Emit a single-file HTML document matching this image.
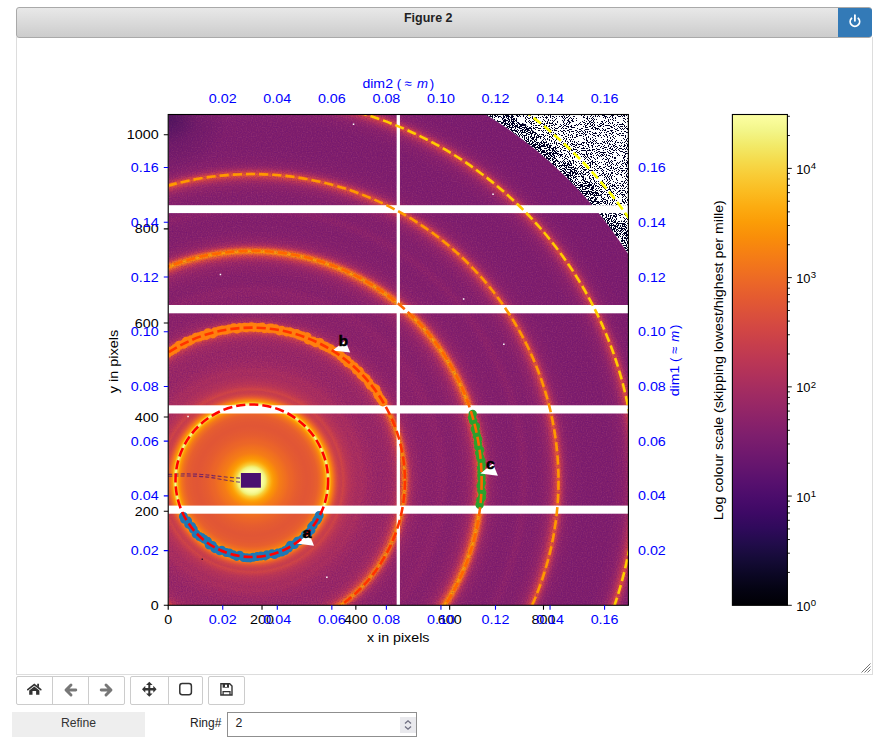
<!DOCTYPE html>
<html><head><meta charset="utf-8">
<style>
html,body{margin:0;padding:0;background:#fff;width:882px;height:747px;overflow:hidden;position:relative;font-family:"Liberation Sans",sans-serif;}
.hdr{position:absolute;left:16px;top:7px;width:854px;height:29px;border:1px solid #a9a9a9;border-radius:3px;background:linear-gradient(#e8e8e8,#cccccc);}
.hdr .t{position:absolute;left:0;right:34px;top:6px;text-align:center;font-weight:bold;font-size:13px;color:#222;letter-spacing:0.1px}
.pbtn{position:absolute;left:838px;top:8px;width:34px;height:29px;background:#337ab7;border-radius:0 3px 3px 0;}
.cv{position:absolute;left:16px;top:37px;width:855px;height:637px;border:1px solid #ddd;border-top:none;}
.bg{position:absolute;top:676px;height:27px;border:1px solid #ccc;border-radius:2px;background:#fff;}
.bd{position:absolute;top:0;bottom:0;width:1px;background:#ccc;}
.refine{position:absolute;left:12px;top:712px;width:133px;height:25px;background:#eeeeee;color:#333;font-size:12.2px;line-height:23px;text-align:center;}
.ring{position:absolute;left:190px;top:711px;height:25px;line-height:25px;font-size:12px;color:#222;}
.inp{position:absolute;left:227px;top:712px;width:188px;height:23px;border:1px solid #8f8f8f;background:#fff;}
.inp .v{position:absolute;left:7.5px;top:-1px;line-height:23px;font-size:12.3px;color:#222;}
.spin{position:absolute;left:172px;top:4px;width:16px;height:16px;background:#e9e9ed;}
</style></head><body>
<div class="hdr"></div>
<div class="pbtn"><svg width="34" height="29" style="position:absolute;left:0;top:0"><path d="M13.5 10.3A4.7 4.7 0 1 0 20.3 10.3" fill="none" stroke="#fff" stroke-width="1.8" stroke-linecap="round"/><path d="M16.9 7.2V12.8" stroke="#fff" stroke-width="1.8" stroke-linecap="round"/></svg></div>
<div class="cv"><svg width="10" height="10" style="position:absolute;right:1px;bottom:1px"><path d="M0.5 9.5L9.5 0.5M3.5 9.5L9.5 3.5M6.5 9.5L9.5 6.5" stroke="#666" stroke-width="0.9"/></svg></div>
<div class="bg" style="left:16px;width:107px"><div class="bd" style="left:35px"></div><div class="bd" style="left:71px"></div></div>
<div class="bg" style="left:130px;width:71px"><div class="bd" style="left:37px"></div></div>
<div class="bg" style="left:208px;width:35px"></div>
<svg width="882" height="747" style="position:absolute;left:0;top:0">
<path fill="#333" d="M29.2 690.6L34.3 686.6L39.4 690.6V694.7H36.1V690.9H32.5V694.7H29.2Z"/>
<path fill="none" stroke="#333" stroke-width="1.6" stroke-linecap="round" d="M27.8 689.7L34.3 684.6L40.8 689.7"/>
<path fill="#333" d="M37.2 683.8H39V687.2L37.2 685.9Z"/>
<path fill="none" stroke="#777" stroke-width="2.9" stroke-linecap="round" stroke-linejoin="round" d="M75.8 690H67M71 685L66 690L71 695"/>
<path fill="none" stroke="#777" stroke-width="2.9" stroke-linecap="round" stroke-linejoin="round" d="M101.2 690H110M106 685L111 690L106 695"/>
<path fill="#333" d="M149.3 681.7L152.6 685H150.3V688H153.3V685.7L156.6 689.2L153.3 692.7V690.4H150.3V693.4H152.6L149.3 696.7L146 693.4H148.3V690.4H145.3V692.7L142 689.2L145.3 685.7V688H148.3V685H146Z"/>
<rect x="179.8" y="683.5" width="11.6" height="11.2" rx="2.4" fill="none" stroke="#333" stroke-width="1.5"/>
<path fill="none" stroke="#333" stroke-width="1.4" d="M220.9 683.8H229.7L232 686.1V695H220.9Z"/>
<path fill="#333" d="M222.6 683.8H229V687.7H222.6Z"/>
<path fill="#fff" d="M225 684.7H227V687H225Z"/>
<path fill="none" stroke="#333" stroke-width="1.3" d="M223.1 695V691.7H230V695"/>
</svg>
<div class="refine">Refine</div>
<div class="ring">Ring#</div>
<div class="inp"><div class="v">2</div><div class="spin"><svg width="16" height="16"><path d="M5 6.5L8 3.8L11 6.5M5 9.5L8 12.2L11 9.5" fill="none" stroke="#6e6e80" stroke-width="1.3"/></svg></div></div>
<svg width="882" height="747" viewBox="0 0 882 747" style="position:absolute;left:0;top:0" font-family="Liberation Sans, sans-serif">
<defs>
<radialGradient id="rg" gradientUnits="userSpaceOnUse" cx="251.8" cy="480.75" r="480">
<stop offset="0.0000" stop-color="#fcffa4"/>
<stop offset="0.0042" stop-color="#fcffa4"/>
<stop offset="0.0083" stop-color="#fcffa4"/>
<stop offset="0.0125" stop-color="#fcffa4"/>
<stop offset="0.0167" stop-color="#fcffa4"/>
<stop offset="0.0208" stop-color="#fcffa4"/>
<stop offset="0.0250" stop-color="#f6fa96"/>
<stop offset="0.0292" stop-color="#f1ef75"/>
<stop offset="0.0333" stop-color="#f7d13d"/>
<stop offset="0.0375" stop-color="#fbba1f"/>
<stop offset="0.0417" stop-color="#fca50a"/>
<stop offset="0.0458" stop-color="#fb9706"/>
<stop offset="0.0500" stop-color="#f98e09"/>
<stop offset="0.0542" stop-color="#f78410"/>
<stop offset="0.0583" stop-color="#f57b17"/>
<stop offset="0.0625" stop-color="#f37819"/>
<stop offset="0.0667" stop-color="#f1731d"/>
<stop offset="0.0708" stop-color="#f06f20"/>
<stop offset="0.0750" stop-color="#ee6a24"/>
<stop offset="0.0792" stop-color="#eb6628"/>
<stop offset="0.0833" stop-color="#eb6429"/>
<stop offset="0.0875" stop-color="#e9612b"/>
<stop offset="0.0917" stop-color="#e75e2e"/>
<stop offset="0.0958" stop-color="#e55c30"/>
<stop offset="0.1000" stop-color="#e45a31"/>
<stop offset="0.1042" stop-color="#e35933"/>
<stop offset="0.1083" stop-color="#e25734"/>
<stop offset="0.1104" stop-color="#e25734"/>
<stop offset="0.1125" stop-color="#e15635"/>
<stop offset="0.1146" stop-color="#e15635"/>
<stop offset="0.1167" stop-color="#e15635"/>
<stop offset="0.1187" stop-color="#e25734"/>
<stop offset="0.1208" stop-color="#e25734"/>
<stop offset="0.1229" stop-color="#e25734"/>
<stop offset="0.1250" stop-color="#e35933"/>
<stop offset="0.1271" stop-color="#e35933"/>
<stop offset="0.1292" stop-color="#e45a31"/>
<stop offset="0.1313" stop-color="#e55c30"/>
<stop offset="0.1333" stop-color="#e65d2f"/>
<stop offset="0.1354" stop-color="#e75e2e"/>
<stop offset="0.1375" stop-color="#e9612b"/>
<stop offset="0.1396" stop-color="#eb6628"/>
<stop offset="0.1417" stop-color="#ee6a24"/>
<stop offset="0.1437" stop-color="#f06f20"/>
<stop offset="0.1458" stop-color="#f3761b"/>
<stop offset="0.1479" stop-color="#f67e14"/>
<stop offset="0.1490" stop-color="#f8850f"/>
<stop offset="0.1500" stop-color="#f98b0b"/>
<stop offset="0.1510" stop-color="#fa9207"/>
<stop offset="0.1521" stop-color="#fb9706"/>
<stop offset="0.1531" stop-color="#fca108"/>
<stop offset="0.1542" stop-color="#fcb014"/>
<stop offset="0.1552" stop-color="#fac026"/>
<stop offset="0.1562" stop-color="#f8cd37"/>
<stop offset="0.1573" stop-color="#f4e156"/>
<stop offset="0.1583" stop-color="#f3f68a"/>
<stop offset="0.1594" stop-color="#f8fb9a"/>
<stop offset="0.1604" stop-color="#f1ef75"/>
<stop offset="0.1615" stop-color="#f4dd4f"/>
<stop offset="0.1625" stop-color="#f9c932"/>
<stop offset="0.1635" stop-color="#fbb61a"/>
<stop offset="0.1646" stop-color="#fca309"/>
<stop offset="0.1656" stop-color="#fa9407"/>
<stop offset="0.1667" stop-color="#f98b0b"/>
<stop offset="0.1677" stop-color="#f78410"/>
<stop offset="0.1688" stop-color="#f57b17"/>
<stop offset="0.1698" stop-color="#f2741c"/>
<stop offset="0.1708" stop-color="#ef6c23"/>
<stop offset="0.1719" stop-color="#eb6628"/>
<stop offset="0.1740" stop-color="#e45a31"/>
<stop offset="0.1760" stop-color="#dd513a"/>
<stop offset="0.1781" stop-color="#d54a41"/>
<stop offset="0.1802" stop-color="#d04545"/>
<stop offset="0.1823" stop-color="#cb4149"/>
<stop offset="0.1844" stop-color="#c83f4b"/>
<stop offset="0.1865" stop-color="#c73e4c"/>
<stop offset="0.1885" stop-color="#cc4248"/>
<stop offset="0.1906" stop-color="#cf4446"/>
<stop offset="0.1927" stop-color="#ca404a"/>
<stop offset="0.1948" stop-color="#c63d4d"/>
<stop offset="0.1969" stop-color="#c13a50"/>
<stop offset="0.1990" stop-color="#bd3853"/>
<stop offset="0.2010" stop-color="#ba3655"/>
<stop offset="0.2031" stop-color="#b73557"/>
<stop offset="0.2052" stop-color="#b63458"/>
<stop offset="0.2073" stop-color="#b3325a"/>
<stop offset="0.2094" stop-color="#b1325a"/>
<stop offset="0.2115" stop-color="#b0315b"/>
<stop offset="0.2156" stop-color="#ad305d"/>
<stop offset="0.2198" stop-color="#a92e5e"/>
<stop offset="0.2240" stop-color="#a92e5e"/>
<stop offset="0.2281" stop-color="#ab2f5e"/>
<stop offset="0.2323" stop-color="#a82e5f"/>
<stop offset="0.2365" stop-color="#a52c60"/>
<stop offset="0.2406" stop-color="#a22b62"/>
<stop offset="0.2448" stop-color="#a02a63"/>
<stop offset="0.2490" stop-color="#9f2a63"/>
<stop offset="0.2531" stop-color="#9d2964"/>
<stop offset="0.2573" stop-color="#9b2964"/>
<stop offset="0.2615" stop-color="#9a2865"/>
<stop offset="0.2656" stop-color="#9a2865"/>
<stop offset="0.2698" stop-color="#9a2865"/>
<stop offset="0.2719" stop-color="#9a2865"/>
<stop offset="0.2740" stop-color="#9a2865"/>
<stop offset="0.2760" stop-color="#9a2865"/>
<stop offset="0.2781" stop-color="#9a2865"/>
<stop offset="0.2802" stop-color="#9b2964"/>
<stop offset="0.2823" stop-color="#9b2964"/>
<stop offset="0.2844" stop-color="#9d2964"/>
<stop offset="0.2865" stop-color="#9d2964"/>
<stop offset="0.2885" stop-color="#9f2a63"/>
<stop offset="0.2906" stop-color="#a02a63"/>
<stop offset="0.2927" stop-color="#a32c61"/>
<stop offset="0.2948" stop-color="#a52c60"/>
<stop offset="0.2969" stop-color="#a82e5f"/>
<stop offset="0.2990" stop-color="#ad305d"/>
<stop offset="0.3010" stop-color="#b3325a"/>
<stop offset="0.3031" stop-color="#b93556"/>
<stop offset="0.3052" stop-color="#c13a50"/>
<stop offset="0.3073" stop-color="#ca404a"/>
<stop offset="0.3083" stop-color="#cf4446"/>
<stop offset="0.3094" stop-color="#d54a41"/>
<stop offset="0.3104" stop-color="#db503b"/>
<stop offset="0.3115" stop-color="#e15635"/>
<stop offset="0.3125" stop-color="#e75e2e"/>
<stop offset="0.3135" stop-color="#ed6925"/>
<stop offset="0.3146" stop-color="#f2741c"/>
<stop offset="0.3156" stop-color="#f68013"/>
<stop offset="0.3167" stop-color="#f8890c"/>
<stop offset="0.3177" stop-color="#fa9008"/>
<stop offset="0.3187" stop-color="#fa9407"/>
<stop offset="0.3198" stop-color="#f78212"/>
<stop offset="0.3208" stop-color="#f57d15"/>
<stop offset="0.3219" stop-color="#f1731d"/>
<stop offset="0.3229" stop-color="#ec6726"/>
<stop offset="0.3240" stop-color="#e55c30"/>
<stop offset="0.3250" stop-color="#de5238"/>
<stop offset="0.3260" stop-color="#d44842"/>
<stop offset="0.3271" stop-color="#cc4248"/>
<stop offset="0.3281" stop-color="#c43c4e"/>
<stop offset="0.3292" stop-color="#bd3853"/>
<stop offset="0.3302" stop-color="#b73557"/>
<stop offset="0.3312" stop-color="#b1325a"/>
<stop offset="0.3323" stop-color="#ad305d"/>
<stop offset="0.3344" stop-color="#a52c60"/>
<stop offset="0.3365" stop-color="#a02a63"/>
<stop offset="0.3385" stop-color="#9b2964"/>
<stop offset="0.3406" stop-color="#982766"/>
<stop offset="0.3427" stop-color="#972766"/>
<stop offset="0.3448" stop-color="#952667"/>
<stop offset="0.3469" stop-color="#932667"/>
<stop offset="0.3490" stop-color="#922568"/>
<stop offset="0.3510" stop-color="#902568"/>
<stop offset="0.3531" stop-color="#8f2469"/>
<stop offset="0.3552" stop-color="#8f2469"/>
<stop offset="0.3573" stop-color="#8d2369"/>
<stop offset="0.3594" stop-color="#8d2369"/>
<stop offset="0.3615" stop-color="#8d2369"/>
<stop offset="0.3635" stop-color="#8d2369"/>
<stop offset="0.3656" stop-color="#8c2369"/>
<stop offset="0.3677" stop-color="#8c2369"/>
<stop offset="0.3698" stop-color="#8c2369"/>
<stop offset="0.3719" stop-color="#8c2369"/>
<stop offset="0.3760" stop-color="#8c2369"/>
<stop offset="0.3802" stop-color="#8c2369"/>
<stop offset="0.3844" stop-color="#8d2369"/>
<stop offset="0.3885" stop-color="#8f2469"/>
<stop offset="0.3927" stop-color="#8f2469"/>
<stop offset="0.3969" stop-color="#8f2469"/>
<stop offset="0.4010" stop-color="#8f2469"/>
<stop offset="0.4052" stop-color="#8c2369"/>
<stop offset="0.4094" stop-color="#8a226a"/>
<stop offset="0.4135" stop-color="#88226a"/>
<stop offset="0.4177" stop-color="#88226a"/>
<stop offset="0.4219" stop-color="#88226a"/>
<stop offset="0.4260" stop-color="#88226a"/>
<stop offset="0.4302" stop-color="#8a226a"/>
<stop offset="0.4323" stop-color="#8a226a"/>
<stop offset="0.4344" stop-color="#8c2369"/>
<stop offset="0.4365" stop-color="#8c2369"/>
<stop offset="0.4385" stop-color="#8d2369"/>
<stop offset="0.4406" stop-color="#8f2469"/>
<stop offset="0.4427" stop-color="#8f2469"/>
<stop offset="0.4448" stop-color="#902568"/>
<stop offset="0.4469" stop-color="#922568"/>
<stop offset="0.4490" stop-color="#952667"/>
<stop offset="0.4510" stop-color="#972766"/>
<stop offset="0.4531" stop-color="#9a2865"/>
<stop offset="0.4552" stop-color="#9d2964"/>
<stop offset="0.4573" stop-color="#a22b62"/>
<stop offset="0.4594" stop-color="#a82e5f"/>
<stop offset="0.4615" stop-color="#b0315b"/>
<stop offset="0.4635" stop-color="#b93556"/>
<stop offset="0.4656" stop-color="#c33b4f"/>
<stop offset="0.4677" stop-color="#ce4347"/>
<stop offset="0.4688" stop-color="#d44842"/>
<stop offset="0.4698" stop-color="#da4e3c"/>
<stop offset="0.4708" stop-color="#e25734"/>
<stop offset="0.4719" stop-color="#e8602d"/>
<stop offset="0.4729" stop-color="#ef6c23"/>
<stop offset="0.4740" stop-color="#f47918"/>
<stop offset="0.4750" stop-color="#f8850f"/>
<stop offset="0.4760" stop-color="#fa9207"/>
<stop offset="0.4771" stop-color="#fb9d07"/>
<stop offset="0.4781" stop-color="#fca309"/>
<stop offset="0.4792" stop-color="#fa9008"/>
<stop offset="0.4802" stop-color="#f98c0a"/>
<stop offset="0.4813" stop-color="#f78410"/>
<stop offset="0.4823" stop-color="#f3761b"/>
<stop offset="0.4833" stop-color="#ed6925"/>
<stop offset="0.4844" stop-color="#e55c30"/>
<stop offset="0.4854" stop-color="#dd513a"/>
<stop offset="0.4865" stop-color="#d34743"/>
<stop offset="0.4875" stop-color="#ca404a"/>
<stop offset="0.4885" stop-color="#c13a50"/>
<stop offset="0.4896" stop-color="#b93556"/>
<stop offset="0.4906" stop-color="#b3325a"/>
<stop offset="0.4917" stop-color="#ad305d"/>
<stop offset="0.4938" stop-color="#a32c61"/>
<stop offset="0.4958" stop-color="#9d2964"/>
<stop offset="0.4979" stop-color="#972766"/>
<stop offset="0.5000" stop-color="#932667"/>
<stop offset="0.5021" stop-color="#902568"/>
<stop offset="0.5042" stop-color="#8f2469"/>
<stop offset="0.5062" stop-color="#8d2369"/>
<stop offset="0.5083" stop-color="#8c2369"/>
<stop offset="0.5104" stop-color="#8a226a"/>
<stop offset="0.5125" stop-color="#88226a"/>
<stop offset="0.5146" stop-color="#88226a"/>
<stop offset="0.5167" stop-color="#87216b"/>
<stop offset="0.5188" stop-color="#87216b"/>
<stop offset="0.5208" stop-color="#85216b"/>
<stop offset="0.5229" stop-color="#85216b"/>
<stop offset="0.5250" stop-color="#85216b"/>
<stop offset="0.5271" stop-color="#85216b"/>
<stop offset="0.5292" stop-color="#85216b"/>
<stop offset="0.5312" stop-color="#85216b"/>
<stop offset="0.5354" stop-color="#84206b"/>
<stop offset="0.5396" stop-color="#84206b"/>
<stop offset="0.5437" stop-color="#84206b"/>
<stop offset="0.5479" stop-color="#85216b"/>
<stop offset="0.5521" stop-color="#85216b"/>
<stop offset="0.5563" stop-color="#87216b"/>
<stop offset="0.5604" stop-color="#8a226a"/>
<stop offset="0.5646" stop-color="#8c2369"/>
<stop offset="0.5687" stop-color="#8c2369"/>
<stop offset="0.5729" stop-color="#8a226a"/>
<stop offset="0.5771" stop-color="#87216b"/>
<stop offset="0.5813" stop-color="#85216b"/>
<stop offset="0.5854" stop-color="#85216b"/>
<stop offset="0.5896" stop-color="#85216b"/>
<stop offset="0.5917" stop-color="#85216b"/>
<stop offset="0.5938" stop-color="#85216b"/>
<stop offset="0.5958" stop-color="#85216b"/>
<stop offset="0.5979" stop-color="#87216b"/>
<stop offset="0.6000" stop-color="#87216b"/>
<stop offset="0.6021" stop-color="#88226a"/>
<stop offset="0.6042" stop-color="#88226a"/>
<stop offset="0.6062" stop-color="#8a226a"/>
<stop offset="0.6083" stop-color="#8c2369"/>
<stop offset="0.6104" stop-color="#8d2369"/>
<stop offset="0.6125" stop-color="#8f2469"/>
<stop offset="0.6146" stop-color="#902568"/>
<stop offset="0.6167" stop-color="#932667"/>
<stop offset="0.6188" stop-color="#972766"/>
<stop offset="0.6208" stop-color="#9b2964"/>
<stop offset="0.6229" stop-color="#a02a63"/>
<stop offset="0.6250" stop-color="#a82e5f"/>
<stop offset="0.6271" stop-color="#b0315b"/>
<stop offset="0.6281" stop-color="#b43359"/>
<stop offset="0.6292" stop-color="#b93556"/>
<stop offset="0.6302" stop-color="#bd3853"/>
<stop offset="0.6312" stop-color="#c33b4f"/>
<stop offset="0.6323" stop-color="#c83f4b"/>
<stop offset="0.6333" stop-color="#cf4446"/>
<stop offset="0.6344" stop-color="#d44842"/>
<stop offset="0.6354" stop-color="#da4e3c"/>
<stop offset="0.6365" stop-color="#df5337"/>
<stop offset="0.6375" stop-color="#e15635"/>
<stop offset="0.6385" stop-color="#e35933"/>
<stop offset="0.6396" stop-color="#db503b"/>
<stop offset="0.6406" stop-color="#d94d3d"/>
<stop offset="0.6417" stop-color="#d54a41"/>
<stop offset="0.6427" stop-color="#cf4446"/>
<stop offset="0.6438" stop-color="#c83f4b"/>
<stop offset="0.6448" stop-color="#c13a50"/>
<stop offset="0.6458" stop-color="#ba3655"/>
<stop offset="0.6469" stop-color="#b3325a"/>
<stop offset="0.6479" stop-color="#ad305d"/>
<stop offset="0.6490" stop-color="#a82e5f"/>
<stop offset="0.6500" stop-color="#a22b62"/>
<stop offset="0.6510" stop-color="#9f2a63"/>
<stop offset="0.6521" stop-color="#9a2865"/>
<stop offset="0.6542" stop-color="#952667"/>
<stop offset="0.6562" stop-color="#902568"/>
<stop offset="0.6583" stop-color="#8d2369"/>
<stop offset="0.6604" stop-color="#8a226a"/>
<stop offset="0.6625" stop-color="#88226a"/>
<stop offset="0.6646" stop-color="#87216b"/>
<stop offset="0.6667" stop-color="#87216b"/>
<stop offset="0.6687" stop-color="#85216b"/>
<stop offset="0.6708" stop-color="#84206b"/>
<stop offset="0.6729" stop-color="#84206b"/>
<stop offset="0.6750" stop-color="#84206b"/>
<stop offset="0.6771" stop-color="#82206c"/>
<stop offset="0.6792" stop-color="#82206c"/>
<stop offset="0.6813" stop-color="#82206c"/>
<stop offset="0.6833" stop-color="#82206c"/>
<stop offset="0.6854" stop-color="#82206c"/>
<stop offset="0.6875" stop-color="#82206c"/>
<stop offset="0.6896" stop-color="#801f6c"/>
<stop offset="0.6917" stop-color="#801f6c"/>
<stop offset="0.6958" stop-color="#801f6c"/>
<stop offset="0.7000" stop-color="#801f6c"/>
<stop offset="0.7042" stop-color="#801f6c"/>
<stop offset="0.7083" stop-color="#801f6c"/>
<stop offset="0.7125" stop-color="#801f6c"/>
<stop offset="0.7167" stop-color="#801f6c"/>
<stop offset="0.7208" stop-color="#801f6c"/>
<stop offset="0.7250" stop-color="#801f6c"/>
<stop offset="0.7292" stop-color="#801f6c"/>
<stop offset="0.7333" stop-color="#801f6c"/>
<stop offset="0.7375" stop-color="#801f6c"/>
<stop offset="0.7417" stop-color="#801f6c"/>
<stop offset="0.7458" stop-color="#801f6c"/>
<stop offset="0.7500" stop-color="#801f6c"/>
<stop offset="0.7521" stop-color="#82206c"/>
<stop offset="0.7542" stop-color="#82206c"/>
<stop offset="0.7562" stop-color="#82206c"/>
<stop offset="0.7583" stop-color="#84206b"/>
<stop offset="0.7604" stop-color="#84206b"/>
<stop offset="0.7625" stop-color="#84206b"/>
<stop offset="0.7646" stop-color="#85216b"/>
<stop offset="0.7667" stop-color="#87216b"/>
<stop offset="0.7688" stop-color="#87216b"/>
<stop offset="0.7708" stop-color="#88226a"/>
<stop offset="0.7729" stop-color="#8a226a"/>
<stop offset="0.7750" stop-color="#8d2369"/>
<stop offset="0.7771" stop-color="#8f2469"/>
<stop offset="0.7792" stop-color="#932667"/>
<stop offset="0.7812" stop-color="#972766"/>
<stop offset="0.7833" stop-color="#9d2964"/>
<stop offset="0.7854" stop-color="#a32c61"/>
<stop offset="0.7875" stop-color="#ab2f5e"/>
<stop offset="0.7885" stop-color="#ae305c"/>
<stop offset="0.7896" stop-color="#b3325a"/>
<stop offset="0.7906" stop-color="#b93556"/>
<stop offset="0.7917" stop-color="#bd3853"/>
<stop offset="0.7927" stop-color="#c33b4f"/>
<stop offset="0.7937" stop-color="#c83f4b"/>
<stop offset="0.7948" stop-color="#ce4347"/>
<stop offset="0.7958" stop-color="#d34743"/>
<stop offset="0.7969" stop-color="#d74b3f"/>
<stop offset="0.7979" stop-color="#d94d3d"/>
<stop offset="0.7990" stop-color="#d24644"/>
<stop offset="0.8000" stop-color="#d24644"/>
<stop offset="0.8010" stop-color="#ce4347"/>
<stop offset="0.8021" stop-color="#ca404a"/>
<stop offset="0.8031" stop-color="#c43c4e"/>
<stop offset="0.8042" stop-color="#bd3853"/>
<stop offset="0.8052" stop-color="#b73557"/>
<stop offset="0.8063" stop-color="#b0315b"/>
<stop offset="0.8073" stop-color="#a92e5e"/>
<stop offset="0.8083" stop-color="#a52c60"/>
<stop offset="0.8094" stop-color="#a02a63"/>
<stop offset="0.8104" stop-color="#9b2964"/>
<stop offset="0.8115" stop-color="#972766"/>
<stop offset="0.8135" stop-color="#922568"/>
<stop offset="0.8156" stop-color="#8d2369"/>
<stop offset="0.8177" stop-color="#8a226a"/>
<stop offset="0.8198" stop-color="#87216b"/>
<stop offset="0.8219" stop-color="#85216b"/>
<stop offset="0.8240" stop-color="#84206b"/>
<stop offset="0.8260" stop-color="#84206b"/>
<stop offset="0.8281" stop-color="#82206c"/>
<stop offset="0.8302" stop-color="#801f6c"/>
<stop offset="0.8323" stop-color="#801f6c"/>
<stop offset="0.8344" stop-color="#801f6c"/>
<stop offset="0.8365" stop-color="#7f1e6c"/>
<stop offset="0.8385" stop-color="#7f1e6c"/>
<stop offset="0.8406" stop-color="#7f1e6c"/>
<stop offset="0.8427" stop-color="#7f1e6c"/>
<stop offset="0.8448" stop-color="#7f1e6c"/>
<stop offset="0.8469" stop-color="#7f1e6c"/>
<stop offset="0.8490" stop-color="#7f1e6c"/>
<stop offset="0.8510" stop-color="#7d1e6d"/>
<stop offset="0.8552" stop-color="#7d1e6d"/>
<stop offset="0.8594" stop-color="#7d1e6d"/>
<stop offset="0.8635" stop-color="#7d1e6d"/>
<stop offset="0.8677" stop-color="#7d1e6d"/>
<stop offset="0.8719" stop-color="#7d1e6d"/>
<stop offset="0.8760" stop-color="#7d1e6d"/>
<stop offset="0.8802" stop-color="#7d1e6d"/>
<stop offset="0.8844" stop-color="#7d1e6d"/>
<stop offset="0.8885" stop-color="#7d1e6d"/>
<stop offset="0.8927" stop-color="#7d1e6d"/>
<stop offset="0.8969" stop-color="#7d1e6d"/>
<stop offset="0.9010" stop-color="#7d1e6d"/>
<stop offset="0.9052" stop-color="#7d1e6d"/>
<stop offset="0.9094" stop-color="#7d1e6d"/>
<stop offset="0.9115" stop-color="#7f1e6c"/>
<stop offset="0.9135" stop-color="#7f1e6c"/>
<stop offset="0.9156" stop-color="#7f1e6c"/>
<stop offset="0.9177" stop-color="#7f1e6c"/>
<stop offset="0.9198" stop-color="#801f6c"/>
<stop offset="0.9219" stop-color="#801f6c"/>
<stop offset="0.9240" stop-color="#82206c"/>
<stop offset="0.9260" stop-color="#82206c"/>
<stop offset="0.9281" stop-color="#84206b"/>
<stop offset="0.9302" stop-color="#85216b"/>
<stop offset="0.9323" stop-color="#87216b"/>
<stop offset="0.9344" stop-color="#88226a"/>
<stop offset="0.9365" stop-color="#8c2369"/>
<stop offset="0.9385" stop-color="#8f2469"/>
<stop offset="0.9406" stop-color="#922568"/>
<stop offset="0.9427" stop-color="#972766"/>
<stop offset="0.9448" stop-color="#9d2964"/>
<stop offset="0.9469" stop-color="#a32c61"/>
<stop offset="0.9479" stop-color="#a82e5f"/>
<stop offset="0.9490" stop-color="#ab2f5e"/>
<stop offset="0.9500" stop-color="#b0315b"/>
<stop offset="0.9510" stop-color="#b43359"/>
<stop offset="0.9521" stop-color="#b93556"/>
<stop offset="0.9531" stop-color="#bd3853"/>
<stop offset="0.9542" stop-color="#c13a50"/>
<stop offset="0.9552" stop-color="#c43c4e"/>
<stop offset="0.9563" stop-color="#c63d4d"/>
<stop offset="0.9573" stop-color="#c03a51"/>
<stop offset="0.9583" stop-color="#bf3952"/>
<stop offset="0.9594" stop-color="#bc3754"/>
<stop offset="0.9604" stop-color="#b93556"/>
<stop offset="0.9615" stop-color="#b43359"/>
<stop offset="0.9625" stop-color="#ae305c"/>
<stop offset="0.9635" stop-color="#a92e5e"/>
<stop offset="0.9646" stop-color="#a32c61"/>
<stop offset="0.9656" stop-color="#9f2a63"/>
<stop offset="0.9667" stop-color="#9b2964"/>
<stop offset="0.9677" stop-color="#972766"/>
<stop offset="0.9688" stop-color="#932667"/>
<stop offset="0.9698" stop-color="#902568"/>
<stop offset="0.9719" stop-color="#8c2369"/>
<stop offset="0.9740" stop-color="#87216b"/>
<stop offset="0.9760" stop-color="#85216b"/>
<stop offset="0.9781" stop-color="#82206c"/>
<stop offset="0.9802" stop-color="#801f6c"/>
<stop offset="0.9823" stop-color="#801f6c"/>
<stop offset="0.9844" stop-color="#7f1e6c"/>
<stop offset="0.9865" stop-color="#7f1e6c"/>
<stop offset="0.9885" stop-color="#7d1e6d"/>
<stop offset="0.9906" stop-color="#7d1e6d"/>
<stop offset="0.9927" stop-color="#7d1e6d"/>
<stop offset="0.9948" stop-color="#7c1d6d"/>
<stop offset="0.9969" stop-color="#7c1d6d"/>
<stop offset="0.9990" stop-color="#7c1d6d"/>
</radialGradient>
<clipPath id="ax"><rect x="168.2" y="114.5" width="460.2" height="490.8"/></clipPath>
<linearGradient id="cb" x1="0" y1="1" x2="0" y2="0">
<stop offset="0.0000" stop-color="#000004"/>
<stop offset="0.0312" stop-color="#040312"/>
<stop offset="0.0625" stop-color="#0b0724"/>
<stop offset="0.0938" stop-color="#150b37"/>
<stop offset="0.1250" stop-color="#210c4a"/>
<stop offset="0.1562" stop-color="#2f0a5b"/>
<stop offset="0.1875" stop-color="#3d0965"/>
<stop offset="0.2188" stop-color="#4a0c6b"/>
<stop offset="0.2500" stop-color="#57106e"/>
<stop offset="0.2812" stop-color="#64156e"/>
<stop offset="0.3125" stop-color="#71196e"/>
<stop offset="0.3438" stop-color="#7d1e6d"/>
<stop offset="0.3750" stop-color="#8a226a"/>
<stop offset="0.4062" stop-color="#972766"/>
<stop offset="0.4375" stop-color="#a32c61"/>
<stop offset="0.4688" stop-color="#b0315b"/>
<stop offset="0.5000" stop-color="#bc3754"/>
<stop offset="0.5312" stop-color="#c73e4c"/>
<stop offset="0.5625" stop-color="#d24644"/>
<stop offset="0.5938" stop-color="#db503b"/>
<stop offset="0.6250" stop-color="#e45a31"/>
<stop offset="0.6562" stop-color="#eb6628"/>
<stop offset="0.6875" stop-color="#f1731d"/>
<stop offset="0.7188" stop-color="#f68013"/>
<stop offset="0.7500" stop-color="#f98e09"/>
<stop offset="0.7812" stop-color="#fb9d07"/>
<stop offset="0.8125" stop-color="#fcac11"/>
<stop offset="0.8438" stop-color="#fbbc21"/>
<stop offset="0.8750" stop-color="#f9cb35"/>
<stop offset="0.9062" stop-color="#f5db4c"/>
<stop offset="0.9375" stop-color="#f2ea69"/>
<stop offset="0.9688" stop-color="#f3f68a"/>
<stop offset="1.0000" stop-color="#fcffa4"/>
</linearGradient>
<filter id="nz" x="0" y="0" width="1" height="1" filterUnits="objectBoundingBox"><feTurbulence type="fractalNoise" baseFrequency="0.95" numOctaves="1" seed="7"/><feColorMatrix type="matrix" values="0 0 0 0 0  0 0 0 0 0  0 0 0 0 0.02  -12 0 0 0 5.8"/><feComponentTransfer><feFuncA type="discrete" tableValues="0 1"/></feComponentTransfer></filter>
<filter id="nz2" x="0" y="0" width="1" height="1" filterUnits="objectBoundingBox"><feTurbulence type="fractalNoise" baseFrequency="0.95" numOctaves="1" seed="11"/><feColorMatrix type="matrix" values="0 0 0 0 0  0 0 0 0 0  0 0 0 0 0.02  -12 0 0 0 6.0"/><feComponentTransfer><feFuncA type="discrete" tableValues="0 1"/></feComponentTransfer></filter>
<filter id="grd" x="0" y="0" width="1" height="1" filterUnits="objectBoundingBox"><feTurbulence type="fractalNoise" baseFrequency="0.8" numOctaves="1" seed="3"/><feGaussianBlur stdDeviation="0.45"/><feColorMatrix type="matrix" values="0 0 0 0 0.08  0 0 0 0 0  0 0 0 0 0.22  0.75 0 0 0 -0.35"/></filter>
<filter id="grl" x="0" y="0" width="1" height="1" filterUnits="objectBoundingBox"><feTurbulence type="fractalNoise" baseFrequency="0.8" numOctaves="1" seed="3"/><feGaussianBlur stdDeviation="0.45"/><feColorMatrix type="matrix" values="0 0 0 0 0.75  0 0 0 0 0.22  0 0 0 0 0.45  -0.5 0 0 0 0.23"/></filter>
<radialGradient id="cd" gradientUnits="userSpaceOnUse" cx="168" cy="114" r="60"><stop offset="0" stop-color="#1a0850" stop-opacity="0.55"/><stop offset="0.5" stop-color="#1a0850" stop-opacity="0.15"/><stop offset="1" stop-color="#1a0850" stop-opacity="0"/></radialGradient>
<radialGradient id="gm" gradientUnits="userSpaceOnUse" cx="251.8" cy="480.75" r="480"><stop offset="0" stop-color="#000"/><stop offset="0.17" stop-color="#000"/><stop offset="0.25" stop-color="#fff"/><stop offset="1" stop-color="#fff"/></radialGradient>
<mask id="gmask" maskUnits="userSpaceOnUse" x="0" y="0" width="882" height="747"><rect x="0" y="0" width="882" height="747" fill="url(#gm)"/></mask>
<clipPath id="outer"><path clip-rule="evenodd" d="M168.2 114.5H628.4V605.3H168.2Z M-176.7 488 a436.4 436.4 0 1 0 872.8 0 a436.4 436.4 0 1 0 -872.8 0Z"/></clipPath>
<clipPath id="band"><path clip-rule="evenodd" d="M-190.3 488 a450 450 0 1 0 900 0 a450 450 0 1 0 -900 0Z M-176.7 488 a436.4 436.4 0 1 0 872.8 0 a436.4 436.4 0 1 0 -872.8 0Z"/></clipPath>
</defs>
<g clip-path="url(#ax)">
<rect x="168.2" y="114.5" width="460.2" height="490.8" fill="url(#rg)"/>
<g mask="url(#gmask)"><rect x="168.2" y="114.5" width="460.2" height="490.8" filter="url(#grd)"/>
<rect x="168.2" y="114.5" width="460.2" height="490.8" filter="url(#grl)"/></g>
<rect x="168" y="114" width="60" height="60" fill="url(#cd)"/>
<path fill="#fff" d="M352.8 123.6h1.5v1.5h-1.5zM219.7 273.8h1.5v1.5h-1.5zM492.3 193.6h1.5v1.5h-1.5zM462.9 298.3h1.5v1.5h-1.5zM503.1 343.6h1.5v1.5h-1.5zM187.3 415.8h1.5v1.5h-1.5zM326.1 576.6h1.5v1.5h-1.5z"/>
<path fill="#1a0a30" d="M201.6 558.6h1.3v1.3h-1.3z"/>
<path fill="#fff" fill-rule="evenodd" d="M168.2 114.5H628.4V605.3H168.2Z M-176.7 488 a436.4 436.4 0 1 0 872.8 0 a436.4 436.4 0 1 0 -872.8 0Z"/>
<g clip-path="url(#outer)"><rect x="480" y="114" width="150" height="150" filter="url(#nz)"/><g clip-path="url(#band)"><rect x="480" y="114" width="150" height="150" filter="url(#nz2)"/></g></g>
<rect x="396.66" y="114.5" width="3.28" height="490.8" fill="#fff"/>
<rect x="168.2" y="205.2" width="460.2" height="7.9" fill="#fff"/>
<rect x="168.2" y="305" width="460.2" height="8.3" fill="#fff"/>
<rect x="168.2" y="405.3" width="460.2" height="8.2" fill="#fff"/>
<rect x="168.2" y="505.6" width="460.2" height="8.1" fill="#fff"/>
<path fill="none" stroke="#551470" stroke-width="1.1" stroke-dasharray="4 2.2" opacity="0.8" d="M168 474.4C185 473.6 200 473.6 213 475.6C225 477 233 477.8 241 478.2M168 476.2C190 475.6 205 476 218 478.8C228 480.6 235 481.8 241 482.2"/>
<rect x="240.9" y="473" width="20" height="14.7" fill="#4a1070"/>
<path fill="#1f77b4" d="M314.71 515.49a4.5 4.5 0 1 0 9 0a4.5 4.5 0 1 0 -9 0M313.3 518.76a4.5 4.5 0 1 0 9 0a4.5 4.5 0 1 0 -9 0M312.03 520.63a4.5 4.5 0 1 0 9 0a4.5 4.5 0 1 0 -9 0M308.7 525.3a4.5 4.5 0 1 0 9 0a4.5 4.5 0 1 0 -9 0M307.12 526.85a4.5 4.5 0 1 0 9 0a4.5 4.5 0 1 0 -9 0M306.49 530.14a4.5 4.5 0 1 0 9 0a4.5 4.5 0 1 0 -9 0M303.77 532.82a4.5 4.5 0 1 0 9 0a4.5 4.5 0 1 0 -9 0M300.83 534.65a4.5 4.5 0 1 0 9 0a4.5 4.5 0 1 0 -9 0M298.21 538.66a4.5 4.5 0 1 0 9 0a4.5 4.5 0 1 0 -9 0M295.24 540.68a4.5 4.5 0 1 0 9 0a4.5 4.5 0 1 0 -9 0M292.73 541.37a4.5 4.5 0 1 0 9 0a4.5 4.5 0 1 0 -9 0M289.99 544.57a4.5 4.5 0 1 0 9 0a4.5 4.5 0 1 0 -9 0M285.97 545.24a4.5 4.5 0 1 0 9 0a4.5 4.5 0 1 0 -9 0M284.1 547.97a4.5 4.5 0 1 0 9 0a4.5 4.5 0 1 0 -9 0M280.59 550.47a4.5 4.5 0 1 0 9 0a4.5 4.5 0 1 0 -9 0M277.32 552.02a4.5 4.5 0 1 0 9 0a4.5 4.5 0 1 0 -9 0M273.3 553.06a4.5 4.5 0 1 0 9 0a4.5 4.5 0 1 0 -9 0M270.03 554.51a4.5 4.5 0 1 0 9 0a4.5 4.5 0 1 0 -9 0M267.55 553.65a4.5 4.5 0 1 0 9 0a4.5 4.5 0 1 0 -9 0M262.45 554.74a4.5 4.5 0 1 0 9 0a4.5 4.5 0 1 0 -9 0M260.76 555.89a4.5 4.5 0 1 0 9 0a4.5 4.5 0 1 0 -9 0M256.48 556.09a4.5 4.5 0 1 0 9 0a4.5 4.5 0 1 0 -9 0M252.67 556.61a4.5 4.5 0 1 0 9 0a4.5 4.5 0 1 0 -9 0M248.76 557.22a4.5 4.5 0 1 0 9 0a4.5 4.5 0 1 0 -9 0M245.7 557.92a4.5 4.5 0 1 0 9 0a4.5 4.5 0 1 0 -9 0M242.35 557.81a4.5 4.5 0 1 0 9 0a4.5 4.5 0 1 0 -9 0M239.18 557.61a4.5 4.5 0 1 0 9 0a4.5 4.5 0 1 0 -9 0M235.24 555.29a4.5 4.5 0 1 0 9 0a4.5 4.5 0 1 0 -9 0M232.15 556.39a4.5 4.5 0 1 0 9 0a4.5 4.5 0 1 0 -9 0M228.77 554.69a4.5 4.5 0 1 0 9 0a4.5 4.5 0 1 0 -9 0M224.92 552.91a4.5 4.5 0 1 0 9 0a4.5 4.5 0 1 0 -9 0M221.8 552.56a4.5 4.5 0 1 0 9 0a4.5 4.5 0 1 0 -9 0M217.28 550.13a4.5 4.5 0 1 0 9 0a4.5 4.5 0 1 0 -9 0M215.27 550.71a4.5 4.5 0 1 0 9 0a4.5 4.5 0 1 0 -9 0M210.4 548.69a4.5 4.5 0 1 0 9 0a4.5 4.5 0 1 0 -9 0M208 545.5a4.5 4.5 0 1 0 9 0a4.5 4.5 0 1 0 -9 0M204.72 544.96a4.5 4.5 0 1 0 9 0a4.5 4.5 0 1 0 -9 0M203.07 541.32a4.5 4.5 0 1 0 9 0a4.5 4.5 0 1 0 -9 0M199.67 539.15a4.5 4.5 0 1 0 9 0a4.5 4.5 0 1 0 -9 0M197.17 537.48a4.5 4.5 0 1 0 9 0a4.5 4.5 0 1 0 -9 0M194.91 536.48a4.5 4.5 0 1 0 9 0a4.5 4.5 0 1 0 -9 0M191.59 533.97a4.5 4.5 0 1 0 9 0a4.5 4.5 0 1 0 -9 0M188.78 529.28a4.5 4.5 0 1 0 9 0a4.5 4.5 0 1 0 -9 0M187.17 526.4a4.5 4.5 0 1 0 9 0a4.5 4.5 0 1 0 -9 0M184.17 524.36a4.5 4.5 0 1 0 9 0a4.5 4.5 0 1 0 -9 0M183.09 520.83a4.5 4.5 0 1 0 9 0a4.5 4.5 0 1 0 -9 0M180 519.34a4.5 4.5 0 1 0 9 0a4.5 4.5 0 1 0 -9 0M178.91 516.4a4.5 4.5 0 1 0 9 0a4.5 4.5 0 1 0 -9 0"/>
<path fill="#ff7f0e" d="M158.08 356.62a4.6 4.6 0 1 0 9.2 0a4.6 4.6 0 1 0 -9.2 0M160 354.89a4.6 4.6 0 1 0 9.2 0a4.6 4.6 0 1 0 -9.2 0M163.32 353.09a4.6 4.6 0 1 0 9.2 0a4.6 4.6 0 1 0 -9.2 0M166.11 351.24a4.6 4.6 0 1 0 9.2 0a4.6 4.6 0 1 0 -9.2 0M169.95 349.15a4.6 4.6 0 1 0 9.2 0a4.6 4.6 0 1 0 -9.2 0M171.88 347.86a4.6 4.6 0 1 0 9.2 0a4.6 4.6 0 1 0 -9.2 0M174.55 345.24a4.6 4.6 0 1 0 9.2 0a4.6 4.6 0 1 0 -9.2 0M179.31 344.1a4.6 4.6 0 1 0 9.2 0a4.6 4.6 0 1 0 -9.2 0M181.53 341.43a4.6 4.6 0 1 0 9.2 0a4.6 4.6 0 1 0 -9.2 0M184.44 341.2a4.6 4.6 0 1 0 9.2 0a4.6 4.6 0 1 0 -9.2 0M186.8 339.87a4.6 4.6 0 1 0 9.2 0a4.6 4.6 0 1 0 -9.2 0M191.41 337.32a4.6 4.6 0 1 0 9.2 0a4.6 4.6 0 1 0 -9.2 0M194.7 336.96a4.6 4.6 0 1 0 9.2 0a4.6 4.6 0 1 0 -9.2 0M198.14 335.53a4.6 4.6 0 1 0 9.2 0a4.6 4.6 0 1 0 -9.2 0M201.55 335.28a4.6 4.6 0 1 0 9.2 0a4.6 4.6 0 1 0 -9.2 0M203.41 332.77a4.6 4.6 0 1 0 9.2 0a4.6 4.6 0 1 0 -9.2 0M208.25 333.81a4.6 4.6 0 1 0 9.2 0a4.6 4.6 0 1 0 -9.2 0M210.73 331.83a4.6 4.6 0 1 0 9.2 0a4.6 4.6 0 1 0 -9.2 0M214.92 330.74a4.6 4.6 0 1 0 9.2 0a4.6 4.6 0 1 0 -9.2 0M217.87 330.02a4.6 4.6 0 1 0 9.2 0a4.6 4.6 0 1 0 -9.2 0M221.35 330.01a4.6 4.6 0 1 0 9.2 0a4.6 4.6 0 1 0 -9.2 0M224.68 328.98a4.6 4.6 0 1 0 9.2 0a4.6 4.6 0 1 0 -9.2 0M229.21 327.74a4.6 4.6 0 1 0 9.2 0a4.6 4.6 0 1 0 -9.2 0M232.27 328.91a4.6 4.6 0 1 0 9.2 0a4.6 4.6 0 1 0 -9.2 0M235.21 327.48a4.6 4.6 0 1 0 9.2 0a4.6 4.6 0 1 0 -9.2 0M239.82 327.29a4.6 4.6 0 1 0 9.2 0a4.6 4.6 0 1 0 -9.2 0M241.99 327.57a4.6 4.6 0 1 0 9.2 0a4.6 4.6 0 1 0 -9.2 0M246.63 326.78a4.6 4.6 0 1 0 9.2 0a4.6 4.6 0 1 0 -9.2 0M249.33 327.31a4.6 4.6 0 1 0 9.2 0a4.6 4.6 0 1 0 -9.2 0M253.98 327.63a4.6 4.6 0 1 0 9.2 0a4.6 4.6 0 1 0 -9.2 0M257.55 327.22a4.6 4.6 0 1 0 9.2 0a4.6 4.6 0 1 0 -9.2 0M259.93 328.54a4.6 4.6 0 1 0 9.2 0a4.6 4.6 0 1 0 -9.2 0M264.64 328.44a4.6 4.6 0 1 0 9.2 0a4.6 4.6 0 1 0 -9.2 0M266.69 328.14a4.6 4.6 0 1 0 9.2 0a4.6 4.6 0 1 0 -9.2 0M270.85 328.8a4.6 4.6 0 1 0 9.2 0a4.6 4.6 0 1 0 -9.2 0M274.94 330.81a4.6 4.6 0 1 0 9.2 0a4.6 4.6 0 1 0 -9.2 0M277.03 330.24a4.6 4.6 0 1 0 9.2 0a4.6 4.6 0 1 0 -9.2 0M281.85 331.78a4.6 4.6 0 1 0 9.2 0a4.6 4.6 0 1 0 -9.2 0M285.27 331.95a4.6 4.6 0 1 0 9.2 0a4.6 4.6 0 1 0 -9.2 0M287.19 332.73a4.6 4.6 0 1 0 9.2 0a4.6 4.6 0 1 0 -9.2 0M292.04 333.66a4.6 4.6 0 1 0 9.2 0a4.6 4.6 0 1 0 -9.2 0M294.42 335.04a4.6 4.6 0 1 0 9.2 0a4.6 4.6 0 1 0 -9.2 0M297.92 336.16a4.6 4.6 0 1 0 9.2 0a4.6 4.6 0 1 0 -9.2 0M302.33 336.81a4.6 4.6 0 1 0 9.2 0a4.6 4.6 0 1 0 -9.2 0M303.6 339.83a4.6 4.6 0 1 0 9.2 0a4.6 4.6 0 1 0 -9.2 0M308.78 341.29a4.6 4.6 0 1 0 9.2 0a4.6 4.6 0 1 0 -9.2 0M311.02 342.64a4.6 4.6 0 1 0 9.2 0a4.6 4.6 0 1 0 -9.2 0M315.29 342.55a4.6 4.6 0 1 0 9.2 0a4.6 4.6 0 1 0 -9.2 0M318.04 345.48a4.6 4.6 0 1 0 9.2 0a4.6 4.6 0 1 0 -9.2 0M320.97 346.44a4.6 4.6 0 1 0 9.2 0a4.6 4.6 0 1 0 -9.2 0M323.22 347.77a4.6 4.6 0 1 0 9.2 0a4.6 4.6 0 1 0 -9.2 0M326.12 348.97a4.6 4.6 0 1 0 9.2 0a4.6 4.6 0 1 0 -9.2 0M329.91 351.32a4.6 4.6 0 1 0 9.2 0a4.6 4.6 0 1 0 -9.2 0M333.34 352.72a4.6 4.6 0 1 0 9.2 0a4.6 4.6 0 1 0 -9.2 0M336.45 356.15a4.6 4.6 0 1 0 9.2 0a4.6 4.6 0 1 0 -9.2 0M339.35 358.66a4.6 4.6 0 1 0 9.2 0a4.6 4.6 0 1 0 -9.2 0M342.1 360.09a4.6 4.6 0 1 0 9.2 0a4.6 4.6 0 1 0 -9.2 0M342.91 362.66a4.6 4.6 0 1 0 9.2 0a4.6 4.6 0 1 0 -9.2 0M345.96 363.94a4.6 4.6 0 1 0 9.2 0a4.6 4.6 0 1 0 -9.2 0M349.7 366.76a4.6 4.6 0 1 0 9.2 0a4.6 4.6 0 1 0 -9.2 0M351.75 370.05a4.6 4.6 0 1 0 9.2 0a4.6 4.6 0 1 0 -9.2 0M354.73 371.18a4.6 4.6 0 1 0 9.2 0a4.6 4.6 0 1 0 -9.2 0M356.42 374.82a4.6 4.6 0 1 0 9.2 0a4.6 4.6 0 1 0 -9.2 0M359.35 377.2a4.6 4.6 0 1 0 9.2 0a4.6 4.6 0 1 0 -9.2 0M361.44 378.53a4.6 4.6 0 1 0 9.2 0a4.6 4.6 0 1 0 -9.2 0M364.15 382.55a4.6 4.6 0 1 0 9.2 0a4.6 4.6 0 1 0 -9.2 0M365.6 385.22a4.6 4.6 0 1 0 9.2 0a4.6 4.6 0 1 0 -9.2 0M369.43 388.02a4.6 4.6 0 1 0 9.2 0a4.6 4.6 0 1 0 -9.2 0M371.33 389.08a4.6 4.6 0 1 0 9.2 0a4.6 4.6 0 1 0 -9.2 0M372.96 393.82a4.6 4.6 0 1 0 9.2 0a4.6 4.6 0 1 0 -9.2 0M373.67 395.44a4.6 4.6 0 1 0 9.2 0a4.6 4.6 0 1 0 -9.2 0M376.07 398.96a4.6 4.6 0 1 0 9.2 0a4.6 4.6 0 1 0 -9.2 0M378.26 401.84a4.6 4.6 0 1 0 9.2 0a4.6 4.6 0 1 0 -9.2 0"/>
<path fill="#2ca02c" d="M468.48 413.99a4.2 4.2 0 1 0 8.4 0a4.2 4.2 0 1 0 -8.4 0M467.89 417.72a4.2 4.2 0 1 0 8.4 0a4.2 4.2 0 1 0 -8.4 0M468.99 421.06a4.2 4.2 0 1 0 8.4 0a4.2 4.2 0 1 0 -8.4 0M471.75 426.27a4.2 4.2 0 1 0 8.4 0a4.2 4.2 0 1 0 -8.4 0M470.63 428.99a4.2 4.2 0 1 0 8.4 0a4.2 4.2 0 1 0 -8.4 0M471.92 432.08a4.2 4.2 0 1 0 8.4 0a4.2 4.2 0 1 0 -8.4 0M472.73 436.33a4.2 4.2 0 1 0 8.4 0a4.2 4.2 0 1 0 -8.4 0M473.92 439.24a4.2 4.2 0 1 0 8.4 0a4.2 4.2 0 1 0 -8.4 0M473.66 442.71a4.2 4.2 0 1 0 8.4 0a4.2 4.2 0 1 0 -8.4 0M474.08 446.76a4.2 4.2 0 1 0 8.4 0a4.2 4.2 0 1 0 -8.4 0M475.88 449.93a4.2 4.2 0 1 0 8.4 0a4.2 4.2 0 1 0 -8.4 0M474.94 453.05a4.2 4.2 0 1 0 8.4 0a4.2 4.2 0 1 0 -8.4 0M475.97 457.56a4.2 4.2 0 1 0 8.4 0a4.2 4.2 0 1 0 -8.4 0M477.21 460.65a4.2 4.2 0 1 0 8.4 0a4.2 4.2 0 1 0 -8.4 0M477.54 464.76a4.2 4.2 0 1 0 8.4 0a4.2 4.2 0 1 0 -8.4 0M476.95 467.8a4.2 4.2 0 1 0 8.4 0a4.2 4.2 0 1 0 -8.4 0M477.26 472.12a4.2 4.2 0 1 0 8.4 0a4.2 4.2 0 1 0 -8.4 0M477.21 475.69a4.2 4.2 0 1 0 8.4 0a4.2 4.2 0 1 0 -8.4 0M477.36 478.3a4.2 4.2 0 1 0 8.4 0a4.2 4.2 0 1 0 -8.4 0M477.52 482.88a4.2 4.2 0 1 0 8.4 0a4.2 4.2 0 1 0 -8.4 0M476.45 485.88a4.2 4.2 0 1 0 8.4 0a4.2 4.2 0 1 0 -8.4 0M477.11 490.47a4.2 4.2 0 1 0 8.4 0a4.2 4.2 0 1 0 -8.4 0M478.07 492.95a4.2 4.2 0 1 0 8.4 0a4.2 4.2 0 1 0 -8.4 0M477.76 497.46a4.2 4.2 0 1 0 8.4 0a4.2 4.2 0 1 0 -8.4 0M476.09 500.32a4.2 4.2 0 1 0 8.4 0a4.2 4.2 0 1 0 -8.4 0M475.44 504.67a4.2 4.2 0 1 0 8.4 0a4.2 4.2 0 1 0 -8.4 0"/>
<path fill="#fff" d="M296.5 543.5L314 545.7L309 533.5Z"/>
<path fill="#fff" d="M332.7 350.4L350.2 352.6L345.2 340.4Z"/>
<path fill="#fff" d="M480.4 473.5L497.9 475.7L492.9 463.5Z"/>
<circle cx="251.8" cy="480.75" r="76.3" fill="none" stroke="#ff0000" stroke-width="2.6" stroke-dasharray="9.2 4"/>
<circle cx="251.8" cy="480.75" r="153.1" fill="none" stroke="#ff3300" stroke-width="2.6" stroke-dasharray="9.2 4"/>
<circle cx="251.8" cy="480.75" r="229.85" fill="none" stroke="#ff6600" stroke-width="2.6" stroke-dasharray="9.2 4"/>
<circle cx="251.8" cy="480.75" r="306.7" fill="none" stroke="#ff9900" stroke-width="2.6" stroke-dasharray="9.2 4"/>
<circle cx="251.8" cy="480.75" r="383.5" fill="none" stroke="#ffcc00" stroke-width="2.6" stroke-dasharray="9.2 4"/>
<circle cx="251.8" cy="480.75" r="459.5" fill="none" stroke="#ffff00" stroke-width="2.6" stroke-dasharray="9.2 4"/>
<text x="307.1" y="537.7" font-size="15.5" font-weight="bold" text-anchor="middle" fill="#000" stroke="#000" stroke-width="0.55">a</text>
<text x="343.3" y="346.4" font-size="15.5" font-weight="bold" text-anchor="middle" fill="#000" stroke="#000" stroke-width="0.55">b</text>
<text x="490.4" y="468.6" font-size="15.5" font-weight="bold" text-anchor="middle" fill="#000" stroke="#000" stroke-width="0.55">c</text>
</g>
<rect x="168.2" y="114.5" width="460.2" height="490.8" fill="none" stroke="#000" stroke-width="1.1"/>
<text x="168.2" y="624" font-size="12.9" fill="#000" text-anchor="middle" textLength="7.95" lengthAdjust="spacingAndGlyphs">0</text>
<text x="262.02" y="624" font-size="12.9" fill="#000" text-anchor="middle" textLength="23.86" lengthAdjust="spacingAndGlyphs">200</text>
<text x="355.85" y="624" font-size="12.9" fill="#000" text-anchor="middle" textLength="23.86" lengthAdjust="spacingAndGlyphs">400</text>
<text x="449.67" y="624" font-size="12.9" fill="#000" text-anchor="middle" textLength="23.86" lengthAdjust="spacingAndGlyphs">600</text>
<text x="543.49" y="624" font-size="12.9" fill="#000" text-anchor="middle" textLength="23.86" lengthAdjust="spacingAndGlyphs">800</text>
<text x="222.75" y="624" font-size="12.9" fill="#0000ff" text-anchor="middle" textLength="27.83" lengthAdjust="spacingAndGlyphs">0.02</text>
<text x="222.75" y="103" font-size="12.9" fill="#0000ff" text-anchor="middle" textLength="27.83" lengthAdjust="spacingAndGlyphs">0.02</text>
<text x="277.3" y="624" font-size="12.9" fill="#0000ff" text-anchor="middle" textLength="27.83" lengthAdjust="spacingAndGlyphs">0.04</text>
<text x="277.3" y="103" font-size="12.9" fill="#0000ff" text-anchor="middle" textLength="27.83" lengthAdjust="spacingAndGlyphs">0.04</text>
<text x="331.84" y="624" font-size="12.9" fill="#0000ff" text-anchor="middle" textLength="27.83" lengthAdjust="spacingAndGlyphs">0.06</text>
<text x="331.84" y="103" font-size="12.9" fill="#0000ff" text-anchor="middle" textLength="27.83" lengthAdjust="spacingAndGlyphs">0.06</text>
<text x="386.39" y="624" font-size="12.9" fill="#0000ff" text-anchor="middle" textLength="27.83" lengthAdjust="spacingAndGlyphs">0.08</text>
<text x="386.39" y="103" font-size="12.9" fill="#0000ff" text-anchor="middle" textLength="27.83" lengthAdjust="spacingAndGlyphs">0.08</text>
<text x="440.94" y="624" font-size="12.9" fill="#0000ff" text-anchor="middle" textLength="27.83" lengthAdjust="spacingAndGlyphs">0.10</text>
<text x="440.94" y="103" font-size="12.9" fill="#0000ff" text-anchor="middle" textLength="27.83" lengthAdjust="spacingAndGlyphs">0.10</text>
<text x="495.49" y="624" font-size="12.9" fill="#0000ff" text-anchor="middle" textLength="27.83" lengthAdjust="spacingAndGlyphs">0.12</text>
<text x="495.49" y="103" font-size="12.9" fill="#0000ff" text-anchor="middle" textLength="27.83" lengthAdjust="spacingAndGlyphs">0.12</text>
<text x="550.04" y="624" font-size="12.9" fill="#0000ff" text-anchor="middle" textLength="27.83" lengthAdjust="spacingAndGlyphs">0.14</text>
<text x="550.04" y="103" font-size="12.9" fill="#0000ff" text-anchor="middle" textLength="27.83" lengthAdjust="spacingAndGlyphs">0.14</text>
<text x="604.58" y="624" font-size="12.9" fill="#0000ff" text-anchor="middle" textLength="27.83" lengthAdjust="spacingAndGlyphs">0.16</text>
<text x="604.58" y="103" font-size="12.9" fill="#0000ff" text-anchor="middle" textLength="27.83" lengthAdjust="spacingAndGlyphs">0.16</text>
<text x="158.7" y="609.85" font-size="12.9" fill="#000" text-anchor="end" textLength="7.95" lengthAdjust="spacingAndGlyphs">0</text>
<text x="158.7" y="515.74" font-size="12.9" fill="#000" text-anchor="end" textLength="23.86" lengthAdjust="spacingAndGlyphs">200</text>
<text x="158.7" y="421.62" font-size="12.9" fill="#000" text-anchor="end" textLength="23.86" lengthAdjust="spacingAndGlyphs">400</text>
<text x="158.7" y="327.51" font-size="12.9" fill="#000" text-anchor="end" textLength="23.86" lengthAdjust="spacingAndGlyphs">600</text>
<text x="158.7" y="233.4" font-size="12.9" fill="#000" text-anchor="end" textLength="23.86" lengthAdjust="spacingAndGlyphs">800</text>
<text x="158.7" y="139.28" font-size="12.9" fill="#000" text-anchor="end" textLength="31.81" lengthAdjust="spacingAndGlyphs">1000</text>
<text x="158.7" y="555.13" font-size="12.9" fill="#0000ff" text-anchor="end" textLength="27.83" lengthAdjust="spacingAndGlyphs">0.02</text>
<text x="638" y="555.13" font-size="12.9" fill="#0000ff" text-anchor="start" textLength="27.83" lengthAdjust="spacingAndGlyphs">0.02</text>
<text x="158.7" y="500.42" font-size="12.9" fill="#0000ff" text-anchor="end" textLength="27.83" lengthAdjust="spacingAndGlyphs">0.04</text>
<text x="638" y="500.42" font-size="12.9" fill="#0000ff" text-anchor="start" textLength="27.83" lengthAdjust="spacingAndGlyphs">0.04</text>
<text x="158.7" y="445.7" font-size="12.9" fill="#0000ff" text-anchor="end" textLength="27.83" lengthAdjust="spacingAndGlyphs">0.06</text>
<text x="638" y="445.7" font-size="12.9" fill="#0000ff" text-anchor="start" textLength="27.83" lengthAdjust="spacingAndGlyphs">0.06</text>
<text x="158.7" y="390.98" font-size="12.9" fill="#0000ff" text-anchor="end" textLength="27.83" lengthAdjust="spacingAndGlyphs">0.08</text>
<text x="638" y="390.98" font-size="12.9" fill="#0000ff" text-anchor="start" textLength="27.83" lengthAdjust="spacingAndGlyphs">0.08</text>
<text x="158.7" y="336.27" font-size="12.9" fill="#0000ff" text-anchor="end" textLength="27.83" lengthAdjust="spacingAndGlyphs">0.10</text>
<text x="638" y="336.27" font-size="12.9" fill="#0000ff" text-anchor="start" textLength="27.83" lengthAdjust="spacingAndGlyphs">0.10</text>
<text x="158.7" y="281.55" font-size="12.9" fill="#0000ff" text-anchor="end" textLength="27.83" lengthAdjust="spacingAndGlyphs">0.12</text>
<text x="638" y="281.55" font-size="12.9" fill="#0000ff" text-anchor="start" textLength="27.83" lengthAdjust="spacingAndGlyphs">0.12</text>
<text x="158.7" y="226.83" font-size="12.9" fill="#0000ff" text-anchor="end" textLength="27.83" lengthAdjust="spacingAndGlyphs">0.14</text>
<text x="638" y="226.83" font-size="12.9" fill="#0000ff" text-anchor="start" textLength="27.83" lengthAdjust="spacingAndGlyphs">0.14</text>
<text x="158.7" y="172.11" font-size="12.9" fill="#0000ff" text-anchor="end" textLength="27.83" lengthAdjust="spacingAndGlyphs">0.16</text>
<text x="638" y="172.11" font-size="12.9" fill="#0000ff" text-anchor="start" textLength="27.83" lengthAdjust="spacingAndGlyphs">0.16</text>
<path stroke="#000" stroke-width="1.1" d="M168.2 605.3v4.4M262.02 605.3v4.4M355.85 605.3v4.4M449.67 605.3v4.4M543.49 605.3v4.4M168.2 605.3h-4.4M168.2 511.19h-4.4M168.2 417.07h-4.4M168.2 322.96h-4.4M168.2 228.85h-4.4M168.2 134.73h-4.4"/>
<path stroke="#0000ff" stroke-width="1.1" d="M222.75 605.3v4.4M277.3 605.3v4.4M331.84 605.3v4.4M386.39 605.3v4.4M440.94 605.3v4.4M495.49 605.3v4.4M550.04 605.3v4.4M604.58 605.3v4.4M168.2 550.58h-4.4M168.2 495.87h-4.4M168.2 441.15h-4.4M168.2 386.43h-4.4M168.2 331.72h-4.4M168.2 277h-4.4M168.2 222.28h-4.4M168.2 167.56h-4.4"/>
<text x="398.2" y="641.8" font-size="13.2" fill="#000" text-anchor="middle" textLength="62.5" lengthAdjust="spacingAndGlyphs">x in pixels</text>
<g transform="translate(118.2 361.5) rotate(-90)"><text x="0" y="0" font-size="13.2" fill="#000" text-anchor="middle" textLength="63.5" lengthAdjust="spacingAndGlyphs">y in pixels</text></g>
<text y="88" font-size="13.2" fill="#0000ff"><tspan x="362.4" textLength="30.6" lengthAdjust="spacingAndGlyphs">dim2</tspan><tspan x="396.8">(</tspan><tspan x="404.6">≈</tspan><tspan x="416.9" font-style="italic">m</tspan><tspan x="429.8">)</tspan></text>
<g transform="translate(678.9 396.3) rotate(-90)"><text y="0" font-size="13.2" fill="#0000ff"><tspan x="0" textLength="30.6" lengthAdjust="spacingAndGlyphs">dim1</tspan><tspan x="34.4">(</tspan><tspan x="42.2">≈</tspan><tspan x="54.5" font-style="italic">m</tspan><tspan x="67.4">)</tspan></text></g>
<rect x="732.4" y="114.5" width="55" height="490.8" fill="url(#cb)" stroke="#000" stroke-width="1.1"/>
<text x="796.2" y="610.9" font-size="12.9" fill="#000">10<tspan font-size="9.6" dx="0.3" dy="-4.9">0</tspan></text>
<text x="796.2" y="501.67" font-size="12.9" fill="#000">10<tspan font-size="9.6" dx="0.3" dy="-4.9">1</tspan></text>
<text x="796.2" y="392.45" font-size="12.9" fill="#000">10<tspan font-size="9.6" dx="0.3" dy="-4.9">2</tspan></text>
<text x="796.2" y="283.23" font-size="12.9" fill="#000">10<tspan font-size="9.6" dx="0.3" dy="-4.9">3</tspan></text>
<text x="796.2" y="174" font-size="12.9" fill="#000">10<tspan font-size="9.6" dx="0.3" dy="-4.9">4</tspan></text>
<path stroke="#000" stroke-width="0.9" d="M787.4 605.3h4.4M787.4 572.42h2.5M787.4 553.19h2.5M787.4 539.54h2.5M787.4 528.96h2.5M787.4 520.31h2.5M787.4 512.99h2.5M787.4 506.66h2.5M787.4 501.07h2.5M787.4 496.07h4.4M787.4 463.19h2.5M787.4 443.96h2.5M787.4 430.31h2.5M787.4 419.73h2.5M787.4 411.08h2.5M787.4 403.77h2.5M787.4 397.43h2.5M787.4 391.85h2.5M787.4 386.85h4.4M787.4 353.97h2.5M787.4 334.74h2.5M787.4 321.09h2.5M787.4 310.51h2.5M787.4 301.86h2.5M787.4 294.54h2.5M787.4 288.21h2.5M787.4 282.62h2.5M787.4 277.62h4.4M787.4 244.74h2.5M787.4 225.51h2.5M787.4 211.86h2.5M787.4 201.28h2.5M787.4 192.63h2.5M787.4 185.32h2.5M787.4 178.98h2.5M787.4 173.4h2.5M787.4 168.4h4.4M787.4 135.52h2.5M787.4 116.29h2.5"/>
<g transform="translate(723 360.2) rotate(-90)"><text x="0" y="0" font-size="13.2" fill="#000" text-anchor="middle" textLength="320" lengthAdjust="spacingAndGlyphs">Log colour scale (skipping lowest/highest per mille)</text></g>
<text x="404" y="21.8" font-size="12.5" font-weight="bold" fill="#222" textLength="48.5" lengthAdjust="spacingAndGlyphs">Figure 2</text>
</svg>
</body></html>
